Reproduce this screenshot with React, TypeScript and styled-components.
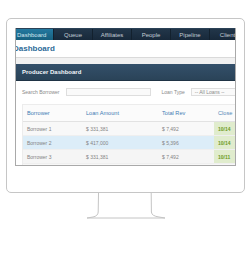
import React from 'react'
import styled, { createGlobalStyle } from 'styled-components'

const GlobalStyle = createGlobalStyle`
  html, body {
    margin: 0;
    padding: 0;
    background: #ffffff;
  }
  body {
    font-family: 'Liberation Sans', Arial, sans-serif;
  }
`

const Page = styled.div`
  width: 250px;
  height: 263px;
  padding-top: 18px;
  box-sizing: border-box;
  display: flex;
  flex-direction: column;
  align-items: center;
  overflow: hidden;
`

const Bezel = styled.div`
  width: 239px;
  height: 175px;
  margin-left: 1px;
  box-sizing: border-box;
  border: 1px solid #c6c6c6;
  border-radius: 5px;
  padding: 9px 8px 0 8px;
  background: #fff;
`

const Screen = styled.div`
  width: 221px;
  height: 138px;
  box-sizing: border-box;
  border: 1px solid #a9a9a9;
  border-top: none;
  overflow: hidden;
  background: #fff;
  display: flex;
  flex-direction: column;
`

const Nav = styled.div`
  height: 12px;
  box-sizing: border-box;
  flex-shrink: 0;
  display: flex;
  background: linear-gradient(#22364a, #18293a);
  border-top: 1px solid #2b4257;
`

const Tab = styled.div<{ active?: boolean; first?: boolean }>`
  flex-shrink: 0;
  width: ${({ first }) => (first ? '38px' : '39px')};
  display: flex;
  align-items: center;
  justify-content: ${({ first }) => (first ? 'flex-start' : 'center')};
  padding-left: ${({ first }) => (first ? '1px' : '0')};
  box-sizing: border-box;
  border-right: 1px solid #13212e;
  font-size: 6px;
  color: ${({ active }) => (active ? '#d6e6f0' : '#c3ccd4')};
  background: ${({ active }) =>
    active ? 'linear-gradient(#2479a0, #17607f)' : 'transparent'};
  white-space: nowrap;
`

const Heading = styled.div`
  height: 17px;
  flex-shrink: 0;
  display: flex;
  align-items: center;
  margin-left: -3px;
  font-size: 8px;
  font-weight: bold;
  color: #2d6b98;
  border-bottom: 1px solid #dadada;
`

const Band = styled.div`
  height: 6px;
  flex-shrink: 0;
  background: #f1f1f1;
`

const PanelHeader = styled.div`
  height: 16px;
  flex-shrink: 0;
  display: flex;
  align-items: center;
  padding-left: 6px;
  font-size: 6px;
  font-weight: bold;
  color: #f2f5f8;
  background: linear-gradient(#34506a, #2a4358);
  border-bottom: 1px solid #1f3345;
`

const Filters = styled.div`
  height: 22px;
  flex-shrink: 0;
  display: flex;
  align-items: center;
  padding-left: 6px;
  font-size: 5px;
  color: #8a8a8a;
  white-space: nowrap;
`

const Label = styled.span<{ gap: number; lead?: number }>`
  margin-right: ${({ gap }) => gap}px;
  margin-left: ${({ lead }) => lead || 0}px;
`

const Field = styled.div<{ w: number }>`
  width: ${({ w }) => w}px;
  height: 8px;
  flex-shrink: 0;
  box-sizing: border-box;
  border: 1px solid #dedede;
  background: #fafafa;
  display: flex;
  align-items: center;
  padding-left: 3px;
  font-size: 5px;
  color: #8a8a8a;
`

const TableWrap = styled.div`
  margin-left: 6px;
  margin-top: 1px;
  border-left: 1px solid #ececec;
  border-top: 1px solid #ececec;
  background: #f7f7f7;
  flex: 1;
`

const Row = styled.div<{ head?: boolean; bg?: string }>`
  display: grid;
  grid-template-columns: 59px 76px 56px 1fr;
  height: ${({ head }) => (head ? '17px' : '14px')};
  background: ${({ bg }) => bg || '#f7f7f7'};
  border-bottom: 1px solid ${({ head }) => (head ? '#e2e2e2' : '#efefef')};
  box-sizing: border-box;
`

const Cell = styled.div<{ head?: boolean; close?: boolean }>`
  display: flex;
  align-items: center;
  padding-left: 4px;
  white-space: nowrap;
  font-size: ${({ head }) => (head ? '5.6px' : '5px')};
  color: ${({ head, close }) =>
    head ? (close ? '#5288b8' : '#3f7bb4') : close ? '#6c9a22' : '#848484'};
  font-weight: ${({ close, head }) => (close && !head ? 'bold' : 'normal')};
  background: ${({ close, head }) => (close && !head ? '#e0eccd' : 'transparent')};
`

const Stand = styled.svg`
  display: block;
  margin-left: 1px;
`

const tabs = ['Dashboard', 'Queue', 'Affiliates', 'People', 'Pipeline', 'Clients']

const rows = [
  { name: 'Borrower 1', amount: '$ 331,381', rev: '$ 7,492', close: '10/14', bg: '#f8f8f8' },
  { name: 'Borrower 2', amount: '$ 417,000', rev: '$ 5,396', close: '10/14', bg: '#dcedf8' },
  { name: 'Borrower 3', amount: '$ 331,381', rev: '$ 7,492', close: '10/11', bg: '#f5f5f5' },
]

export default function App() {
  return (
    <>
      <GlobalStyle />
      <Page>
        <Bezel>
          <Screen>
            <Nav>
              {tabs.map((t, i) => (
                <Tab key={t} active={i === 0} first={i === 0}>
                  {t}
                </Tab>
              ))}
            </Nav>
            <Heading>Dashboard</Heading>
            <Band />
            <PanelHeader>Producer Dashboard</PanelHeader>
            <Filters>
              <Label gap={6}>Search Borrower</Label>
              <Field w={85} />
              <Label gap={6} lead={11}>
                Loan Type
              </Label>
              <Field w={50}>-- All Loans --</Field>
            </Filters>
            <TableWrap>
              <Row head bg="#fbfbfb">
                <Cell head>Borrower</Cell>
                <Cell head>Loan Amount</Cell>
                <Cell head>Total Rev</Cell>
                <Cell head close>
                  Close
                </Cell>
              </Row>
              {rows.map((r) => (
                <Row key={r.name} bg={r.bg}>
                  <Cell>{r.name}</Cell>
                  <Cell>{r.amount}</Cell>
                  <Cell>{r.rev}</Cell>
                  <Cell close>{r.close}</Cell>
                </Row>
              ))}
            </TableWrap>
          </Screen>
        </Bezel>
        <Stand width="82" height="28" viewBox="0 0 82 28">
          <path
            d="M13.5 0 L13.2 19 Q13 23 8 24 L2 25 L80 25 L74 24 Q66.6 23 66.4 19 L66.2 0"
            fill="none"
            stroke="#c4c4c4"
            strokeWidth="1"
          />
        </Stand>
      </Page>
    </>
  )
}
